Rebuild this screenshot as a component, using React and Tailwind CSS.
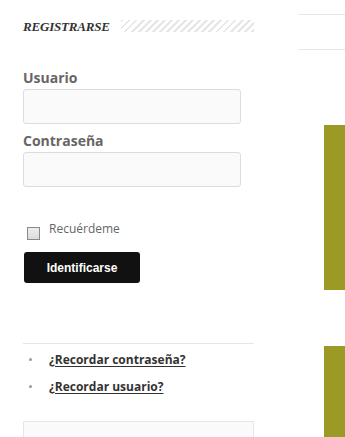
export default function App() {
  return (
    <main className="flex w-[345px] h-[437px] overflow-hidden bg-white font-['Open_Sans',sans-serif]">
      <section className="ml-[23px] w-[231px] shrink-0">
        <div className="mt-[18px] flex items-center h-[16px]">
          <h2 className="font-['Liberation_Serif',serif] italic font-bold text-[13px] leading-none text-[#333] tracking-[-0.2px]">
            REGISTRARSE
          </h2>
          <div className="ml-[11px] flex-1 h-[12px] bg-[repeating-linear-gradient(135deg,#e6e6e6_0_2px,transparent_2px_5px)]" />
        </div>

        <label className="block mt-[35px] text-[14px] font-bold leading-[18px] text-[#666]">Usuario</label>
        <div className="mt-[2px] w-[218px] h-[35px] rounded-[3px] border border-[#dcdcdc] bg-[#fafafa]" />

        <label className="block mt-[8px] text-[14px] font-bold leading-[18px] text-[#666]">Contraseña</label>
        <div className="mt-[2px] w-[218px] h-[35px] rounded-[3px] border border-[#dcdcdc] bg-[#fafafa]" />

        <div className="mt-[34px] flex items-start">
          <span className="ml-[4px] mt-[6px] w-[13px] h-[13px] border border-[#8a8a8a] bg-[linear-gradient(#eee,#dcdcdc)]" />
          <span className="ml-[9px] text-[12px] leading-[16px] text-[#666]">Recuérdeme</span>
        </div>

        <button className="block mt-[12px] ml-[1px] w-[116px] h-[31px] rounded-[3px] bg-[#111] text-white font-['Liberation_Sans',sans-serif] font-bold text-[12px]">
          Identificarse
        </button>

        <div className="mt-[60px] border-t border-[#e6e6e6]" />
        <ul className="mt-[7px] flex flex-col gap-[10px]">
          <li className="flex items-center h-[17px]">
            <span className="ml-[6px] w-[3px] h-[3px] rounded-full bg-[#999]" />
            <a href="#" className="ml-[17px] text-[12px] font-bold text-[#333] underline underline-offset-2">¿Recordar contraseña?</a>
          </li>
          <li className="flex items-center h-[17px]">
            <span className="ml-[6px] w-[3px] h-[3px] rounded-full bg-[#999]" />
            <a href="#" className="ml-[17px] text-[12px] font-bold text-[#333] underline underline-offset-2">¿Recordar usuario?</a>
          </li>
        </ul>
        <div className="mt-[26px] h-[40px] border border-[#e6e6e6] bg-[#fafafa]" />
      </section>

      <aside className="ml-[44px] w-[47px] shrink-0">
        <div className="mt-[14px] h-[36px] border-y border-[#e8e8e8]" />
        <div className="mt-[75px] ml-[26px] h-[165px] bg-[#9c9a27]" />
        <div className="mt-[56px] ml-[26px] h-[100px] bg-[#9c9a27]" />
      </aside>
    </main>
  );
}
